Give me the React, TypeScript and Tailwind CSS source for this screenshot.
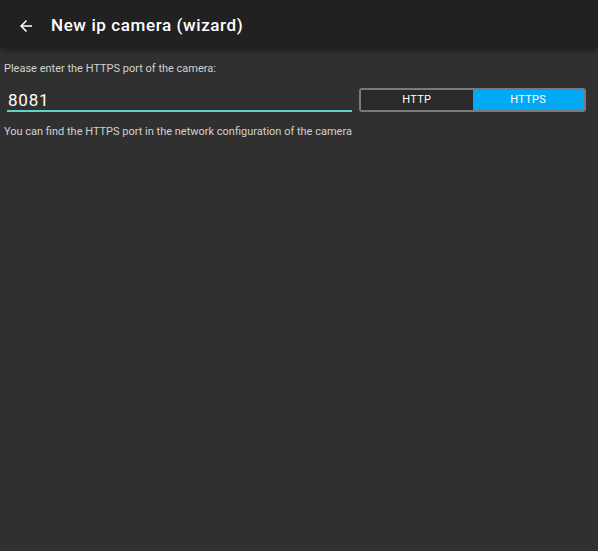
export default function App() {
  return (
    <div
      className="w-[598px] h-[551px] bg-[#303030] flex flex-col overflow-hidden"
      style={{ fontFamily: "Roboto, 'Liberation Sans', sans-serif" }}
    >
      <div className="h-[48px] pt-[3px] bg-[#212121] flex items-center shrink-0 shadow-[0_2px_6px_rgba(0,0,0,0.45)] relative z-10">
        <svg className="ml-[17px] w-[18px] h-[18px]" viewBox="0 0 24 24" fill="#ffffff">
          <path d="M20 11H7.83l5.59-5.59L12 4l-8 8 8 8 1.41-1.41L7.83 13H20v-2z" />
        </svg>
        <span className="ml-[16px] text-white text-[17px] font-medium tracking-[0.6px]">New ip camera (wizard)</span>
      </div>

      <div className="flex flex-col px-[4px] pt-[14px]">
        <div className="text-[11px] text-[#d0d0d0] leading-[14px]">Please enter the HTTPS port of the camera:</div>

        <div className="flex items-start mt-[12px] gap-[7px]">
          <div className="w-[345px] ml-[3px] border-b-2 border-[#5dd6c8] pt-[2px]">
            <div className="text-[17px] text-white leading-[20px] pl-[1px] tracking-[0.8px]">8081</div>
          </div>
          <div className="flex w-[227px] h-[24px] border-2 border-[#7a7a7a] rounded-[3px] overflow-hidden">
            <div className="flex-1 flex items-center justify-center text-[11px] text-white bg-[#2a2a2a] tracking-[0.3px]">HTTP</div>
            <div className="flex-1 flex items-center justify-center text-[11px] text-white bg-[#03a9f4] tracking-[0.3px]">HTTPS</div>
          </div>
        </div>

        <div className="text-[11px] text-[#d0d0d0] leading-[14px] mt-[13px]">
          You can find the HTTPS port in the network configuration of the camera
        </div>
      </div>
    </div>
  );
}
